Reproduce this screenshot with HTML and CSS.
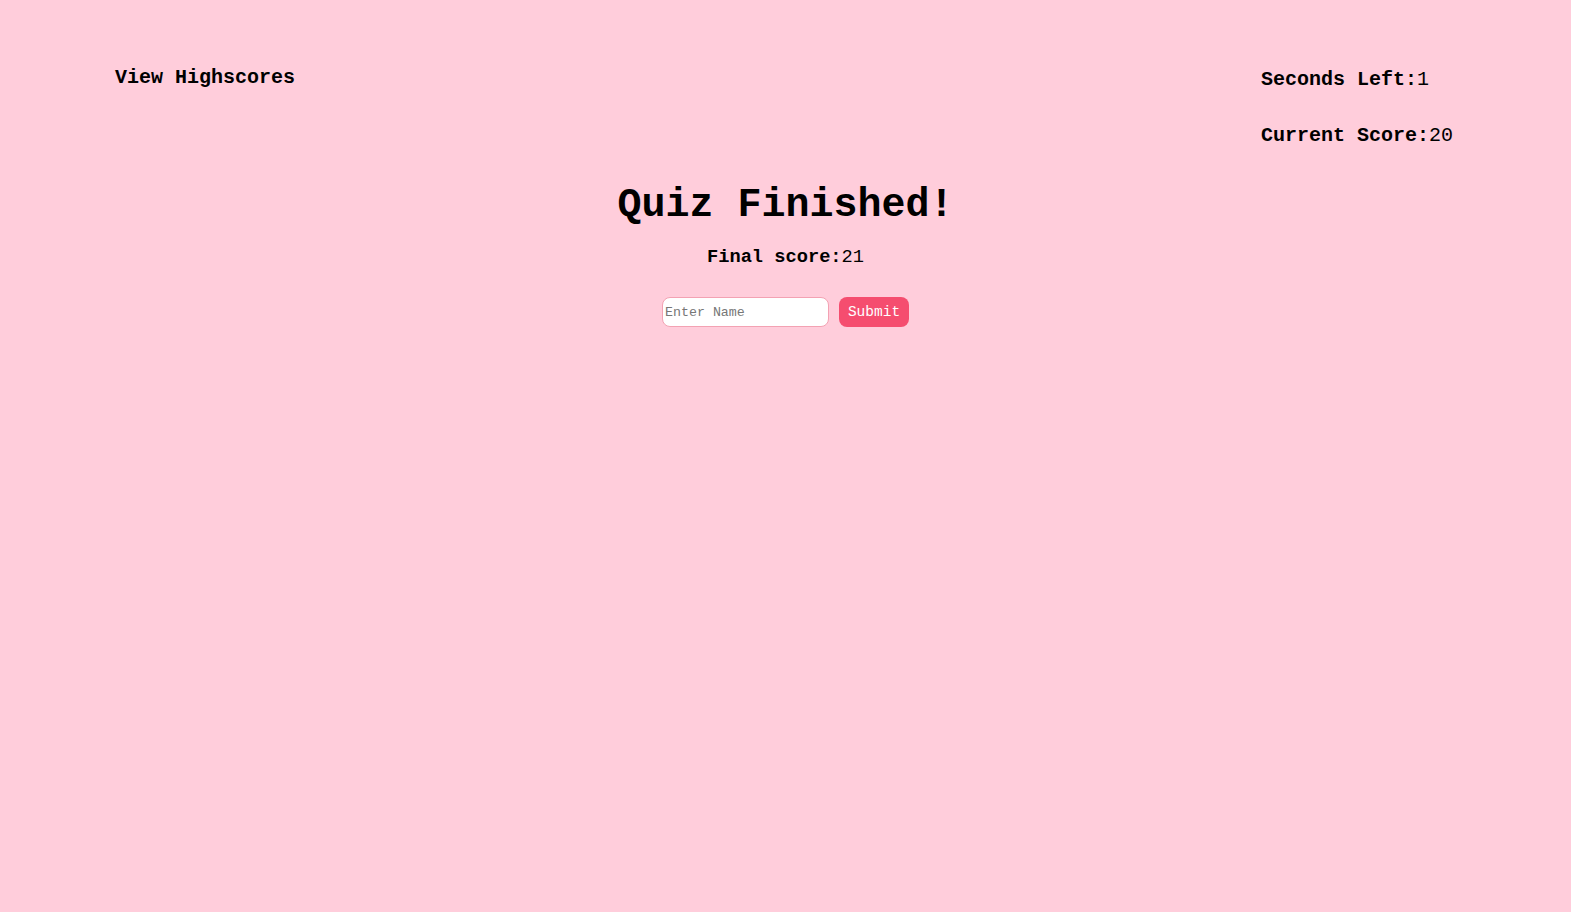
FILE: index.html
```html
<!DOCTYPE html>
<html>
<head>
<meta charset="utf-8">
<link rel="stylesheet" href="styles.css">
</head>
<body>
<header class="top">
  <a class="highscores">View Highscores</a>
  <div class="stats">
    <p class="stat">Seconds Left:<span class="num">1</span></p>
    <p class="stat">Current Score:<span class="num">20</span></p>
  </div>
</header>
<main class="done">
  <h1 class="title">Quiz Finished!</h1>
  <h3 class="final">Final score:<span class="num">21</span></h3>
  <form class="entry">
    <input class="name" type="text" placeholder="Enter Name">
    <button class="submit" type="button">Submit</button>
  </form>
</main>
</body>
</html>
```
FILE: styles.css
```css
html, body {
  margin: 0;
  padding: 0;
  background: #ffcddb;
  font-family: "Liberation Mono", "Courier New", monospace;
  color: #000;
}
.top {
  display: flex;
  justify-content: space-between;
  align-items: flex-start;
  padding: 66px 0 0 115px;
}
.highscores {
  font-size: 20px;
  font-weight: bold;
  line-height: 24px;
}
.stats {
  width: 310px;
}
.stat {
  margin: 2px 0 32px;
  font-size: 20px;
  font-weight: bold;
  line-height: 24px;
}
.stat:last-child {
  margin-bottom: 31px;
}
.num {
  font-weight: normal;
}
.done {
  display: flex;
  flex-direction: column;
  align-items: center;
}
.title {
  margin: 3px 0 0;
  font-size: 40px;
  line-height: 48px;
}
.final {
  margin: 16px 0 0;
  font-size: 18.7px;
  line-height: 22px;
}
.entry {
  display: flex;
  gap: 10px;
  margin-top: 29px;
}
.name {
  box-sizing: border-box;
  width: 167px;
  height: 30px;
  border: 1px solid #f3a2b3;
  border-radius: 8px;
  background: #fff;
  padding: 0 2px;
  font-family: "Liberation Mono", monospace;
  font-size: 13.3px;
}
.name::placeholder {
  color: #777;
}
.submit {
  box-sizing: border-box;
  width: 70px;
  height: 30px;
  border: none;
  border-radius: 8px;
  background: #f54d6f;
  color: #fff;
  font-family: "Liberation Mono", monospace;
  font-size: 14.5px;
  padding: 0;
}
```
